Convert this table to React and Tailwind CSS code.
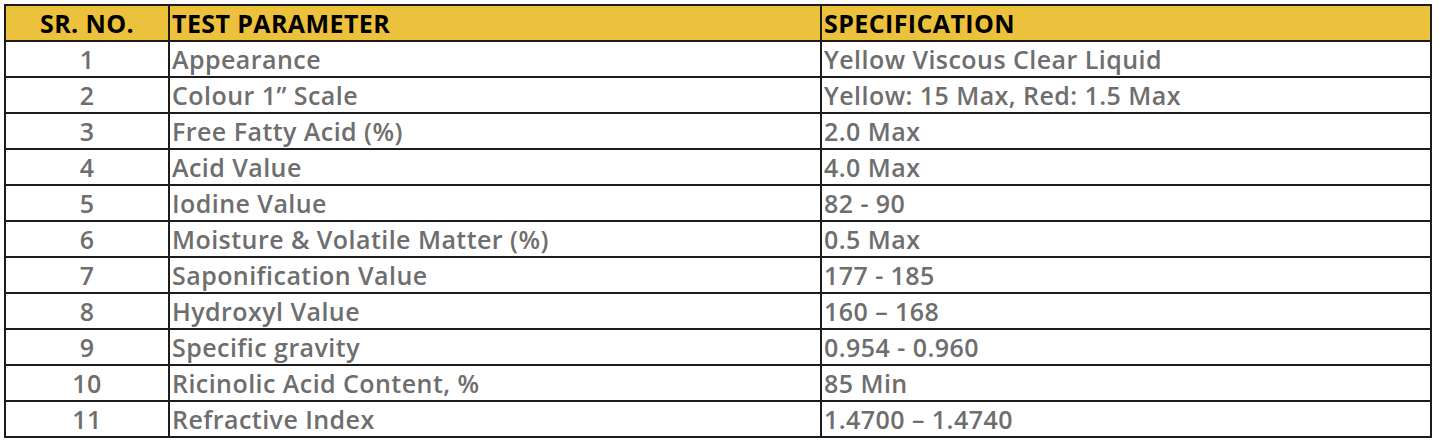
import React from 'react'

const rows = [
  ['1', 'Appearance', 'Yellow Viscous Clear Liquid'],
  ['2', 'Colour 1” Scale', 'Yellow: 15 Max, Red: 1.5 Max'],
  ['3', 'Free Fatty Acid (%)', '2.0 Max'],
  ['4', 'Acid Value', '4.0 Max'],
  ['5', 'Iodine Value', '82 - 90'],
  ['6', 'Moisture & Volatile Matter (%)', '0.5 Max'],
  ['7', 'Saponification Value', '177 - 185'],
  ['8', 'Hydroxyl Value', '160 – 168'],
  ['9', 'Specific gravity', '0.954 - 0.960'],
  ['10', 'Ricinolic Acid Content, %', '85 Min'],
  ['11', 'Refractive Index', '1.4700 – 1.4740'],
]

export default function App() {
  return (
    <div className="min-h-screen bg-white pt-[4px] pl-[4px] font-['Open_Sans',sans-serif]">
      <div className="w-[1428px] border-t-2 border-l-2 border-r-2 border-[#1c1c1c]">
        {/* header */}
        <div className="grid grid-cols-[164px_652px_1fr] bg-[#ecc13b] text-black font-bold text-[25px] tracking-[0.4px] leading-none">
          <div className="h-[36px] flex items-center justify-center border-r-2 border-b-2 border-[#1c1c1c]">SR. NO.</div>
          <div className="h-[36px] flex items-center pl-[2px] border-r-2 border-b-2 border-[#1c1c1c]">TEST PARAMETER</div>
          <div className="h-[36px] flex items-center pl-[2px] border-b-2 border-[#1c1c1c]">SPECIFICATION</div>
        </div>
        {rows.map(([no, param, spec]) => (
          <div key={no} className="grid grid-cols-[164px_652px_1fr] text-[#6e6e6e] font-[550] text-[25px] tracking-[0.45px] leading-none">
            <div className="h-[36px] flex items-center justify-center border-r-2 border-b-2 border-[#1c1c1c]">{no}</div>
            <div className="h-[36px] flex items-center pl-[2px] border-r-2 border-b-2 border-[#1c1c1c]">{param}</div>
            <div className="h-[36px] flex items-center pl-[2px] border-b-2 border-[#1c1c1c]">{spec}</div>
          </div>
        ))}
      </div>
    </div>
  )
}
